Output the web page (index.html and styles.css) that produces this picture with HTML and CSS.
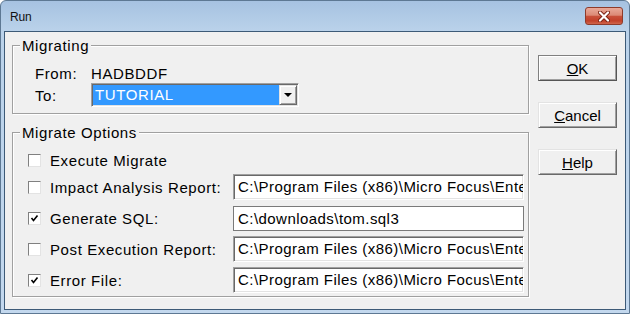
FILE: index.html
```html
<!DOCTYPE html>
<html lang="en">
<head>
	<meta charset="UTF-8">
	<title>Run</title>
	<link rel="stylesheet" href="styles.css">
</head>
<body>
<div class="window">
    <div class="titlebar">
        <span class="title">Run</span>
        <span class="close">
            <svg width="12" height="11" viewBox="0 0 12 11">
                <path d="M2 1.5 L10 9.5 M10 1.5 L2 9.5" stroke="#7a2214" stroke-width="4" stroke-linecap="round"/>
                <path d="M2 1.5 L10 9.5 M10 1.5 L2 9.5" stroke="#fff" stroke-width="2.2" stroke-linecap="round"/>
            </svg>
        </span>
    </div>
    <div class="client">
        <div class="main">
            <fieldset class="group migrating">
                <legend>Migrating</legend>
                <div class="source">
                    <span>From:</span>
                    <span>HADBDDF</span>
                    <span>To:</span>
                    <div class="combo">
                        <span class="combo-value">TUTORIAL</span>
                        <span class="combo-btn"><span class="arrow"></span></span>
                    </div>
                </div>
            </fieldset>
            <fieldset class="group options">
                <legend>Migrate Options</legend>
                <div class="opt plain">
                    <span class="check"></span>
                    <span class="opt-label">Execute Migrate</span>
                </div>
                <div class="opt">
                    <span class="check"></span>
                    <span class="opt-label">Impact Analysis Report:</span>
                    <div class="field">C:\Program Files (x86)\Micro Focus\Enterprise Developer\bin\impact.rpt</div>
                </div>
                <div class="opt">
                    <span class="check"><svg width="9" height="9" viewBox="0 0 9 9"><path d="M1.5 4 L3.5 6.5 L7.5 1.5" fill="none" stroke="#000" stroke-width="1.6"/></svg></span>
                    <span class="opt-label">Generate SQL:</span>
                    <div class="field focus">C:\downloads\tom.sql3</div>
                </div>
                <div class="opt">
                    <span class="check"></span>
                    <span class="opt-label">Post Execution Report:</span>
                    <div class="field">C:\Program Files (x86)\Micro Focus\Enterprise Developer\bin\post.rpt</div>
                </div>
                <div class="opt">
                    <span class="check"><svg width="9" height="9" viewBox="0 0 9 9"><path d="M1.5 4 L3.5 6.5 L7.5 1.5" fill="none" stroke="#000" stroke-width="1.6"/></svg></span>
                    <span class="opt-label">Error File:</span>
                    <div class="field">C:\Program Files (x86)\Micro Focus\Enterprise Developer\bin\error.txt</div>
                </div>
            </fieldset>
        </div>
        <div class="buttons">
            <button class="btn default"><u>O</u>K</button>
            <button class="btn"><u>C</u>ancel</button>
            <button class="btn"><u>H</u>elp</button>
        </div>
    </div>
</div>
</body>
</html>
```

FILE: styles.css
```css
* {
    box-sizing: border-box;
}

body {
    margin: 0;
    background: #fff;
    font-family: "Liberation Sans", Arial, sans-serif;
    font-size: 15px;
    letter-spacing: 0.6px;
    color: #000;
}

.window {
    width: 630px;
    height: 314px;
    display: flex;
    flex-direction: column;
    border: 1px solid #5d7893;
    border-radius: 6px 6px 0 0;
    background: linear-gradient(#a6c2e1, #bad2ea 30px, #c3d8ee);
}

.titlebar {
    height: 30px;
    display: flex;
    justify-content: space-between;
    align-items: flex-start;
}

.title {
    margin: 9px 0 0 9px;
    font-size: 12px;
    line-height: 14px;
    letter-spacing: -0.2px;
    color: #111;
}

.close {
    width: 38px;
    height: 18px;
    margin: 6px 6px 0 0;
    display: flex;
    align-items: center;
    justify-content: center;
    border: 1px solid #8e3b2b;
    border-radius: 3px;
    background: linear-gradient(#e9a999, #dc8a76 45%, #c9503a 52%, #c2412a 80%, #d0664c);
}

.client {
    flex: 1;
    display: flex;
    margin: 0 3px 3px;
    padding: 5px 8px 0 7px;
    border: 1px solid #3d5a77;
    background: #f0f0f0;
}

.main {
    width: 517px;
}

.group {
    margin: 0;
    border: 1px solid #a0a0a0;
    box-shadow: inset 1px 1px #fff, 1px 1px #fff;
}

.group legend {
    padding: 0 2px;
    line-height: 17px;
    background: #f0f0f0;
}

.migrating {
    padding: 11px 4px 6px 7px;
}

.source {
    margin-left: 15px;
    display: grid;
    grid-template-columns: 56px 208px;
    grid-template-rows: 17px 24px;
    row-gap: 1px;
    align-items: center;
}

.combo {
    height: 24px;
    display: flex;
    border: 1px solid;
    border-color: #a0a0a0 #fff #fff #a0a0a0;
    box-shadow: inset 1px 1px #696969, inset -1px -1px #e3e3e3;
    background: #fff;
    padding: 1px;
}

.combo-value {
    flex: 1;
    padding-left: 2px;
    line-height: 20px;
    color: #fff;
    background: #3399ff;
}

.combo-btn {
    width: 18px;
    display: flex;
    align-items: center;
    justify-content: center;
    background: #f0f0f0;
    border: 1px solid;
    border-color: #e3e3e3 #696969 #696969 #e3e3e3;
    box-shadow: inset 1px 1px #fff, inset -1px -1px #a0a0a0;
}

.arrow {
    border-left: 4px solid transparent;
    border-right: 4px solid transparent;
    border-top: 4px solid #000;
}

.options {
    margin-top: 10px;
    padding: 8px 4px 3px 7px;
}

.opt {
    display: flex;
    align-items: center;
    height: 26px;
    margin-left: 8px;
}

.opt + .opt {
    margin-top: 5px;
}

.opt.plain {
    height: 22px;
    margin-bottom: -2px;
}

.check {
    flex: none;
    width: 13px;
    height: 13px;
    margin-right: 9px;
    display: flex;
    align-items: center;
    justify-content: center;
    background: #fff;
    border: 1px solid;
    border-color: #808080 #e3e3e3 #e3e3e3 #808080;
}

.opt-label {
    width: 183px;
    white-space: nowrap;
}

.field {
    width: 291px;
    height: 26px;
    padding-left: 4px;
    line-height: 24px;
    letter-spacing: 0.45px;
    white-space: nowrap;
    overflow: hidden;
    background: #fff;
    border: 1px solid;
    border-color: #a0a0a0 #fff #fff #a0a0a0;
    box-shadow: inset 1px 1px #696969, inset -1px -1px #e3e3e3;
}

.field.focus {
    height: 25px;
    border-color: #7a7a7a;
    box-shadow: none;
}

.buttons {
    width: 79px;
    margin-left: 9px;
    padding-top: 18px;
    display: flex;
    flex-direction: column;
    gap: 21px;
}

.btn {
    height: 26px;
    padding: 0;
    font: inherit;
    color: #000;
    background: #f0f0f0;
    border: 1px solid;
    border-color: #e3e3e3 #696969 #696969 #e3e3e3;
    box-shadow: inset 1px 1px #fff, inset -1px -1px #a0a0a0;
}

.btn.default {
    border-color: #808080 #555 #555 #808080;
}
```
